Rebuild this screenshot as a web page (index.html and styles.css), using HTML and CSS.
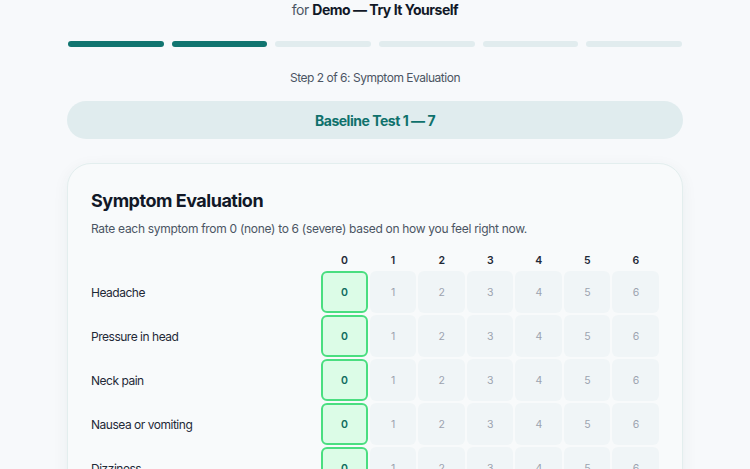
FILE: index.html
```html
<!DOCTYPE html>
<html lang="en">
<head>
<meta charset="utf-8">
<title>Symptom Evaluation</title>
<link rel="stylesheet" href="styles.css">
</head>
<body>
<div class="wrap">
  <p class="for">for <strong>Demo — Try It Yourself</strong></p>
  <div class="progress">
    <span class="seg on"></span><span class="seg on"></span><span class="seg"></span><span class="seg"></span><span class="seg"></span><span class="seg"></span>
  </div>
  <p class="step">Step 2 of 6: Symptom Evaluation</p>
  <div class="badge">Baseline Test 1 — 7</div>
  <section class="card">
    <h1 class="title">Symptom Evaluation</h1>
    <p class="sub">Rate each symptom from 0 (none) to 6 (severe) based on how you feel right now.</p>
    <div class="grid">
      <div class="hd-blank"></div>
      <div class="hd">0</div><div class="hd">1</div><div class="hd">2</div><div class="hd">3</div><div class="hd">4</div><div class="hd">5</div><div class="hd">6</div>

      <div class="label">Headache</div>
      <div class="cell sel">0</div><div class="cell">1</div><div class="cell">2</div><div class="cell">3</div><div class="cell">4</div><div class="cell">5</div><div class="cell">6</div>

      <div class="label">Pressure in head</div>
      <div class="cell sel">0</div><div class="cell">1</div><div class="cell">2</div><div class="cell">3</div><div class="cell">4</div><div class="cell">5</div><div class="cell">6</div>

      <div class="label">Neck pain</div>
      <div class="cell sel">0</div><div class="cell">1</div><div class="cell">2</div><div class="cell">3</div><div class="cell">4</div><div class="cell">5</div><div class="cell">6</div>

      <div class="label">Nausea or vomiting</div>
      <div class="cell sel">0</div><div class="cell">1</div><div class="cell">2</div><div class="cell">3</div><div class="cell">4</div><div class="cell">5</div><div class="cell">6</div>

      <div class="label">Dizziness</div>
      <div class="cell sel">0</div><div class="cell">1</div><div class="cell">2</div><div class="cell">3</div><div class="cell">4</div><div class="cell">5</div><div class="cell">6</div>
    </div>
  </section>
</div>
</body>
</html>
```
FILE: styles.css
```css
* { box-sizing: border-box; }
html, body { margin: 0; padding: 0; }
body {
  background: #f7f9fb;
  font-family: Inter, "Noto Sans", "Liberation Sans", sans-serif;
  color: #111827;
  letter-spacing: -0.03em;
  height: 469px;
  overflow: hidden;
}
.wrap {
  width: 616px;
  margin: 0 auto;
  display: flex;
  flex-direction: column;
}
.for {
  margin: 0;
  height: 20px;
  line-height: 19px;
  text-align: center;
  font-size: 14px;
  color: #4b5563;
}
.for strong { color: #111827; font-weight: 700; }
.progress {
  margin-top: 21px;
  display: flex;
  gap: 8px;
  padding: 0 1px;
}
.seg {
  flex: 1;
  height: 6px;
  border-radius: 3px;
  background: #e1ecee;
}
.seg.on { background: #117570; }
.step {
  margin: 22px 0 0;
  height: 16px;
  line-height: 17px;
  text-align: center;
  font-size: 12px;
  color: #4b5563;
}
.badge {
  margin-top: 16px;
  height: 38px;
  border-radius: 19px;
  background: #e0ecee;
  color: #0f716c;
  font-weight: 700;
  font-size: 14px;
  display: flex;
  align-items: center;
  justify-content: center;
}
.card {
  margin-top: 24px;
  border: 1px solid #e3eeee;
  border-radius: 24px;
  background: #f8fafb;
  box-shadow: 0 4px 16px rgba(15, 60, 70, 0.06);
  padding: 24px 23px 40px;
}
.title {
  margin: 0;
  font-size: 18px;
  line-height: 26px;
  font-weight: 700;
  color: #111827;
}
.sub {
  margin: 7px 0 0;
  font-size: 12px;
  line-height: 16px;
  letter-spacing: -0.025em;
  color: #4b5563;
}
.grid {
  margin-top: 14px;
  display: grid;
  grid-template-columns: 228px repeat(7, 1fr);
  grid-auto-rows: 42px;
  grid-template-rows: 18px;
  gap: 2px;
}
.hd {
  display: flex;
  align-items: center;
  justify-content: center;
  font-size: 10.5px;
  font-weight: 600;
  color: #1f2937;
}
.label {
  display: flex;
  align-items: center;
  font-size: 12px;
  color: #1f2937;
}
.cell {
  display: flex;
  align-items: center;
  justify-content: center;
  border-radius: 6px;
  background: #f0f5f7;
  color: #9ca3af;
  font-size: 10.5px;
}
.cell.sel {
  background: #dcfce7;
  border: 2px solid #4ade80;
  color: #0f6b5f;
  font-weight: 600;
}
```
